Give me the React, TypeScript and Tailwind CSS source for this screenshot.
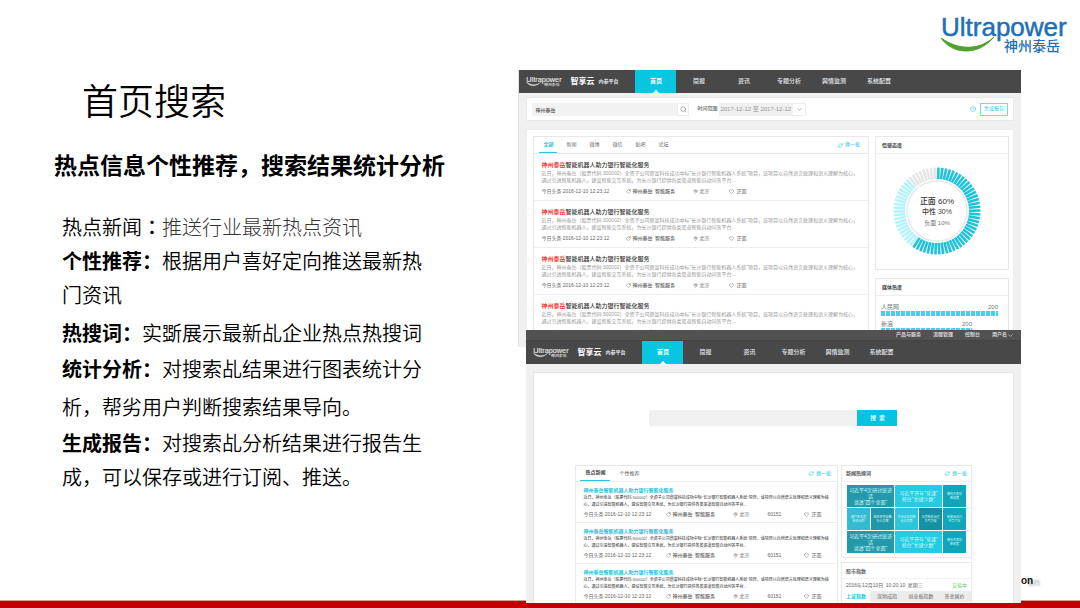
import React, { useState } from 'react';
import { ChevronDown, Heart, HelpCircle, MapPin, RefreshCw, Search, Tag } from 'lucide-react';

const navItems = ['简报', '资讯', '专题分析', '舆情监测', '系统配置'];
const sources = ['全部', '新闻', '微博', '微信', '贴吧', '论坛'];
const summary =
    '近日，神州泰岳（股票代码:300002）全资子公司鼎富科技成功中标"长沙银行智能机器人系统"项目，该项目以自然语言处理和语义理解为核心，通过引进智能机器人，建设智能交互系统，为长沙银行提供各类渠道智能自动问答平台...';

const hotWords = [
    { text: '习近平4次研讨班讲\n话\n谈透"四个全面"', style: 'col-span-2 text-[5px] leading-[6px] bg-[#2499aa]' },
    { text: '习近平开年"党课"\n抓住"关键少数"', style: 'col-span-2 text-[5px] leading-[6px] bg-[#24cbe3]' },
    { text: '楼市去库存\n新政策', style: 'text-[3px] leading-[4px] bg-[#0fa6bc]' },
    { text: '棚户区改造\n新政出炉', style: 'text-[3px] leading-[4px] bg-[#33bcd1]' },
    { text: '域名争夺战略\n办公方案', style: 'text-[3px] leading-[4px] bg-[#2098a9]' },
    { text: '中国企业创新\n走向世界', style: 'text-[3px] leading-[4px] bg-[#2bc6db]' },
    { text: '北京新政治理\n大气污染', style: 'text-[3px] leading-[4px] bg-[#1492a3]' },
    { text: '新能源出行\n共享汽车', style: 'text-[3px] leading-[4px] bg-[#10a6bb]' },
    { text: '习近平4次研讨班讲\n话\n谈透"四个全面"', style: 'col-span-2 text-[5px] leading-[6px] bg-[#2499aa]' },
    { text: '习近平开年"党课"\n抓住"关键少数"', style: 'col-span-2 text-[5px] leading-[6px] bg-[#24cbe3]' },
    { text: '楼市去库存\n新政策', style: 'text-[3px] leading-[4px] bg-[#0fa6bc]' },
];

const Logo: React.FC<{ className: string; color: string; swoosh: string }> = ({ className, color, swoosh }) => (
    <svg viewBox="0 0 128 38" className={`overflow-visible ${className}`} role="img" aria-label="Ultrapower 神州泰岳">
        <text x="1" y="19" fill={color} stroke={color} strokeWidth="0.5" fontSize="26" fontFamily="Liberation Sans, Arial, sans-serif">
            Ultrapower
        </text>
        <path d="M1 21 C12 37 37 40 54 20 C39 34 18 33 1 21 Z" fill={swoosh} stroke={swoosh} strokeWidth="1" />
        <text x="64" y="34" fill={color} fontSize="14" fontWeight="500" fontFamily="Noto Sans CJK SC, sans-serif">
            神州泰岳
        </text>
    </svg>
);

const NavBar: React.FC<{ itemWidth: string }> = ({ itemWidth }) => (
    <nav className="flex h-[23px] items-stretch bg-[#484848] pl-[7px] text-[6px] text-gray-200">
        <div className="flex w-[109px] items-center">
            <Logo className="h-[11px] w-9" color="#e5e5e5" swoosh="#e5e5e5" />
            <span className="ml-2 text-[8px] font-bold text-white">智享云</span>
            <span className="ml-1 text-[5px] font-bold">内参平台</span>
        </div>
        <a href="#home" className="relative flex w-[41px] items-center justify-center bg-[#08c5e0] font-bold text-white">
            首页
            <span className="absolute bottom-0 border-x-[3px] border-b-[3px] border-x-transparent border-b-white" />
        </a>
        {navItems.map((item) => (
            <a key={item} href="#nav" className={`flex items-center justify-center font-medium ${itemWidth}`}>
                {item}
            </a>
        ))}
    </nav>
);

const Refresh: React.FC = () => (
    <button className="flex items-center gap-0.5 text-[5px] text-[#25c5e0]">
        <RefreshCw size={5} />
        换一批
    </button>
);

const Meta: React.FC<{ columns: string; count?: string }> = ({ columns, count }) => (
    <div className={`grid text-[5px] leading-[8px] whitespace-nowrap text-[#666] ${columns}`}>
        <span>今日头条 2016-12-10 12:23:12</span>
        <span className="flex items-center gap-px">
            <Tag size={5} className="-scale-x-100" />
            <span className="font-medium">神州泰岳&ensp;智能服务</span>
        </span>
        <span className="flex items-center gap-px">
            <MapPin size={5} />
            北京
        </span>
        {count && <span>{count}</span>}
        <span className="flex items-center gap-0.5">
            <Heart size={5} />
            正面
        </span>
    </div>
);

const Donut: React.FC = () => {
    const ticks = Array.from({ length: 70 }, (_, i) => i);
    return (
        <svg viewBox="0 0 88 88" className="size-[88px]" fontFamily="Liberation Sans, Noto Sans CJK SC, sans-serif" textAnchor="middle">
            {ticks.map((i) => (
                <line
                    key={i}
                    x1="44"
                    y1="0.5"
                    x2="44"
                    y2="12"
                    strokeWidth="2.6"
                    stroke={i < 42 ? '#1fc3dc' : i < 62 ? '#b4f3fc' : '#e6e6e6'}
                    transform={`rotate(${(i * 360) / 70 + 2} 44 44)`}
                />
            ))}
            <circle cx="44" cy="44" r="30" fill="#fff" stroke="#e9e9e9" strokeWidth="1.5" />
            <text x="44" y="37" fontSize="8" fontWeight="500" fill="#333">正面 60%</text>
            <text x="44" y="47" fontSize="7" fontWeight="500" fill="#444">中性 30%</text>
            <text x="44" y="58" fontSize="6" fill="#777">负面 10%</text>
        </svg>
    );
};

const ResultsScreen: React.FC = () => {
    const [source, setSource] = useState('全部');
    const [keyword, setKeyword] = useState('神州泰岳');

    return (
        <section className="h-[277px] shrink-0 overflow-hidden border-l border-[#e2e2e2] bg-[#f0f0f0]">
            <NavBar itemWidth="w-[45px]" />
            <div className="mx-[7px] mt-1 flex h-6 items-center border border-[#e8e8e8] bg-white px-[5px] text-[5px]">
                <input
                    aria-label="关键词"
                    value={keyword}
                    onChange={(e) => setKeyword(e.target.value)}
                    className="h-[13px] w-[145px] bg-[#f2f2f2] px-[3px] text-[5px] font-medium text-[#555]"
                />
                <button aria-label="搜索" className="flex h-[13px] w-3 items-center justify-center border border-[#eee] text-[#888]">
                    <Search size={7} />
                </button>
                <label htmlFor="range" className="ml-2 font-medium text-[#666]">时间范围</label>
                <div className="relative ml-0.5 flex items-center">
                    <select id="range" className="h-[13px] w-[87px] appearance-none border border-[#eee] bg-[#f0f0f0] text-[6px] text-[#999]">
                        <option>2017-12-12 至 2017-12-12</option>
                    </select>
                    <span className="pointer-events-none absolute right-px flex h-[11px] w-3 items-center justify-center bg-white text-[#777]">
                        <ChevronDown size={7} />
                    </span>
                </div>
                <HelpCircle size={6} className="ml-auto text-[#25c5e0]" />
                <button className="ml-1 h-[13px] w-7 border border-[#6fdcec] text-[5px] text-[#25c5e0]">生成报告</button>
            </div>

            <div className="mx-[7px] mt-2 flex items-start gap-1.5 border border-[#eee] bg-white py-1.5 pr-1 pl-1.5">
                <div className="min-w-0 flex-1 border border-[#e8e8e8]">
                    <div className="flex h-[17px] items-stretch border-b border-[#e8e8e8] pr-2 pl-[5px]">
                        {sources.map((name) => (
                            <button
                                key={name}
                                onClick={() => setSource(name)}
                                className={`mr-[5px] w-[18px] border-b text-[5px] ${
                                    name === source ? 'border-[#25c5e0] font-bold text-[#25c5e0]' : 'border-transparent text-[#666]'
                                }`}
                            >
                                {name}
                            </button>
                        ))}
                        <div className="ml-auto flex">
                            <Refresh />
                        </div>
                    </div>
                    {[1, 2, 3, 4].map((n) => (
                        <article key={n} className="h-[47px] border-b border-[#eee] px-[7px] pt-[7px]">
                            <h3 className="text-[6px] leading-[9px] font-medium text-[#333]">
                                <span className="font-bold text-[#f03b3b]">神州泰岳</span>智能机器人助力银行智能化服务
                            </h3>
                            <p className="text-[5px] leading-[7px] text-[#999]">{summary}</p>
                            <div className="mt-[3px]">
                                <Meta columns="grid-cols-[85px_67px_36px_auto]" />
                            </div>
                        </article>
                    ))}
                </div>

                <div className="flex w-[134px] flex-col gap-2">
                    <div className="border border-[#e8e8e8]">
                        <h4 className="h-[17px] border-b border-[#eee] px-1.5 text-[5px] leading-[16px] font-bold text-[#444]">情感态度</h4>
                        <div className="pt-[13px] pb-[14px] pl-[17px]">
                            <Donut />
                        </div>
                    </div>
                    <div className="border border-[#e8e8e8] pb-6">
                        <h4 className="h-[17px] border-b border-[#eee] px-1.5 text-[5px] leading-[16px] font-bold text-[#444]">媒体热度</h4>
                        <div className="px-[5px] pt-[7px] text-[6px] leading-[8px] text-[#777]">
                            <div className="flex w-[117px] justify-between">
                                <span>人民网</span>
                                <span>200</span>
                            </div>
                            <div className="h-[5px] w-[117px] bg-[repeating-linear-gradient(90deg,#3dd3ea_0_4px,transparent_4px_5px)]" />
                            <div className="mt-1 flex w-[91px] justify-between">
                                <span>新浪</span>
                                <span>200</span>
                            </div>
                            <div className="h-[5px] w-[91px] bg-[repeating-linear-gradient(90deg,#3dd3ea_0_4px,transparent_4px_5px)]" />
                        </div>
                    </div>
                </div>
            </div>
        </section>
    );
};

const HomeScreen: React.FC = () => (
    <section className="z-10 -mt-[17px] -mb-[3px] ml-2 min-h-0 flex-1 overflow-hidden bg-[#f0f0f0]">
        <div className="flex h-[11px] items-center justify-end gap-3 border-b border-[#444] bg-[#525252] pr-[7px] text-[5px] font-medium text-gray-200">
            <a href="#products">产品与服务</a>
            <a href="#flow">流程管理</a>
            <a href="#console">控制台</a>
            <button className="flex items-center">
                用户名
                <ChevronDown size={7} />
            </button>
        </div>
        <NavBar itemWidth="w-[44px]" />
        <div className="mx-[7px] mt-2 border border-[#e4e4e4] bg-white pt-[37px]">
            <form className="ml-[115px] flex h-4" onSubmit={(e) => e.preventDefault()}>
                <input aria-label="搜索内容" className="w-[208px] bg-[#f0f0f0] px-1 text-[6px]" />
                <button className="w-10 bg-[#04c4e2] text-[6px] font-medium text-white">搜&ensp;索</button>
            </form>

            <div className="mt-[39px] mr-[41px] ml-[41px] flex items-start gap-[3px]">
                <div className="min-w-0 flex-1 border border-[#e8e8e8]">
                    <div className="flex h-4 items-stretch border-b border-[#eee] pr-1.5 pl-1 text-[5px]">
                        <button className="w-[30px] border-b border-[#25c5e0] font-bold text-[#444]">热点新闻</button>
                        <button className="ml-1 w-[30px] text-[#555]">个性推荐</button>
                        <div className="ml-auto flex">
                            <Refresh />
                        </div>
                    </div>
                    {[1, 2, 3].map((n) => (
                        <article key={n} className="border-b border-[#eee] px-[7px] pt-1 pb-1">
                            <h3 className="text-[5px] leading-[8px] font-bold text-[#1fc0da]">神州泰岳智能机器人助力银行智能化服务</h3>
                            <p className="text-[4px] leading-[7px] font-medium text-[#555]">{summary}</p>
                            <div className="mt-[2px]">
                                <Meta columns="grid-cols-[83px_67px_34px_37px_auto]" count="60151" />
                            </div>
                        </article>
                    ))}
                </div>

                <div className="flex w-[131px] flex-col gap-1">
                    <div className="border border-[#e8e8e8]">
                        <div className="flex h-4 items-center justify-between border-b border-[#eee] pr-1 pl-1">
                            <h4 className="text-[5px] font-bold text-[#555]">新闻热搜词</h4>
                            <Refresh />
                        </div>
                        <div className="mx-[5px] mt-[3px] mb-1 grid auto-rows-[22px] grid-cols-5 gap-px">
                            {hotWords.map((word, i) => (
                                <a
                                    key={i}
                                    href="#word"
                                    className={`flex items-center justify-center text-center whitespace-pre text-[#d5f6fa] ${word.style}`}
                                >
                                    {word.text}
                                </a>
                            ))}
                        </div>
                    </div>
                    <div className="border border-[#e8e8e8] text-[5px] text-[#666]">
                        <h4 className="h-4 border-b border-[#f2f2f2] px-1 leading-[16px] font-bold">股市指数</h4>
                        <div className="flex justify-between px-1 leading-[12px]">
                            <span>2016年12月10日&ensp;10:20:10&ensp;星期三</span>
                            <span className="text-[#5fc95b]">交易中</span>
                        </div>
                        <div className="flex h-[11px] bg-[#ececec]">
                            <button className="w-7 bg-white font-bold text-[#25c5e0]">上证指数</button>
                            <button className="w-[34px]">深圳成指</button>
                            <button className="w-[34px]">创业板指数</button>
                            <button className="flex-1">贵金属价</button>
                        </div>
                        <div className="h-5" />
                    </div>
                </div>
            </div>
        </div>
    </section>
);

const App: React.FC = () => {
    return (
        <div className="flex h-screen flex-col overflow-hidden bg-white font-['Liberation_Sans','Noto_Sans_CJK_SC',sans-serif]" lang="zh-CN">
            <header className="flex h-[70px] shrink-0 justify-end pt-[17px] pr-3">
                <Logo className="h-[38px] w-32" color="#1d6fb8" swoosh="#4fa12c" />
            </header>

            <main className="flex min-h-0 flex-1">
                <div className="w-[48%] shrink-0 pt-[9px] pl-[54px] font-['Noto_Sans_CJK_SC',sans-serif] text-black">
                    <h1 className="ml-7 text-[36px] leading-[40px] font-[350]">首页搜索</h1>
                    <h2 className="mt-7 text-[23px] leading-[34px] font-bold whitespace-nowrap">热点信息个性推荐，搜索结果统计分析</h2>
                    <div className="mt-[29px] ml-2 w-[366px] text-[20px] leading-[34px] font-[350]">
                        <p className="font-light text-[#333]">
                            <span className="font-[350] text-black">热点新闻</span>
                            <span lang="zh-TW" className="font-['Noto_Sans_CJK_TC',sans-serif] font-medium text-black">：</span>
                            推送行业最新热点资讯
                        </p>
                        <p>
                            <b>个性推荐：</b>根据用户喜好定向推送最新热<br />
                            门资讯
                        </p>
                        <p className="mt-1"><b>热搜词：</b>实斲展示最新乩企业热点热搜词</p>
                        <p className="leading-[38px]">
                            <b>统计分析：</b>对搜索乩结果进行图表统计分<br />
                            析，帮劣用户判断搜索结果导向。
                        </p>
                        <p>
                            <b>生成报告：</b>对搜索乩分析结果进行报告生<br />
                            成，可以保存或进行订阅、推送。
                        </p>
                    </div>
                </div>

                <div className="flex min-w-0 flex-1 flex-col">
                    <ResultsScreen />
                    <HomeScreen />
                </div>

                <div className="flex w-[59px] shrink-0 items-end pb-3">
                    <span className="text-[10px] leading-[14px] font-bold text-[#111] [text-shadow:7px_2px_2px_#bbb]">on</span>
                </div>
            </main>

            <footer className="h-2 shrink-0 border-t border-[#d99] bg-[#bf0000]" />
        </div>
    );
};

export default App;
